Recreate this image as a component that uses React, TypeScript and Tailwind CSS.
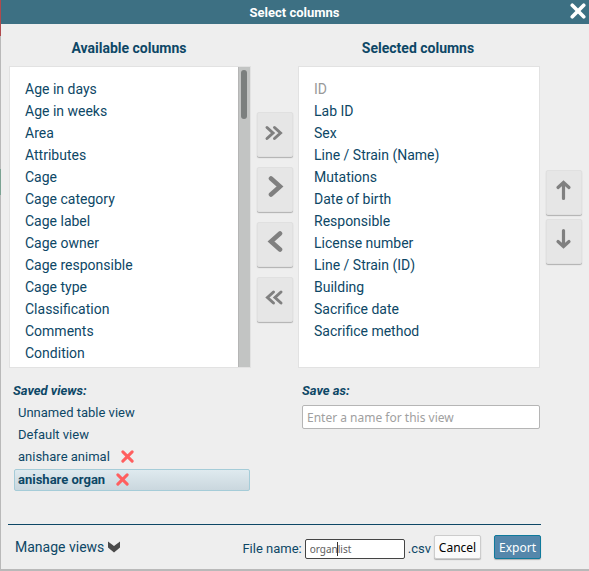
import type { ReactNode } from 'react';

const available = [
  'Age in days', 'Age in weeks', 'Area', 'Attributes', 'Cage', 'Cage category', 'Cage label',
  'Cage owner', 'Cage responsible', 'Cage type', 'Classification', 'Comments', 'Condition',
];

const selected = [
  'ID', 'Lab ID', 'Sex', 'Line / Strain (Name)', 'Mutations', 'Date of birth', 'Responsible',
  'License number', 'Line / Strain (ID)', 'Building', 'Sacrifice date', 'Sacrifice method',
];

function Stroke({ d, width }: { d: string; width: number }) {
  return (
    <svg
      viewBox="0 0 24 24"
      className="size-6"
      fill="none"
      stroke="currentColor"
      strokeWidth={width}
      strokeLinecap="round"
      strokeLinejoin="miter"
      aria-hidden="true"
    >
      <path d={d} />
    </svg>
  );
}

function ToolButton({ label, children }: { label: string; children: ReactNode }) {
  return (
    <button
      type="button"
      aria-label={label}
      className="flex h-[45px] w-9 items-start justify-center rounded-xs border border-[#e0e0e0] bg-[#e6e6e6] pt-2 text-[#808080] shadow-[0_1px_1px_#b0b0b0]"
    >
      {children}
    </button>
  );
}

function Cross({ className }: { className: string }) {
  return (
    <svg
      viewBox="0 0 14 14"
      className={className}
      fill="none"
      stroke="currentColor"
      strokeWidth="3.2"
      strokeLinecap="round"
      aria-hidden="true"
    >
      <path d="M2 2 12 12M12 2 2 12" />
    </svg>
  );
}

function DeleteButton({ label }: { label: string }) {
  return (
    <button type="button" aria-label={label} className="mb-0.5 ml-[11px] text-[#ff5f5f]">
      <Cross className="size-[13px]" />
    </button>
  );
}

export default function App() {
  return (
    <div className="flex bg-[#b9b9b9] pb-0.5 font-['Roboto',sans-serif] text-[13px] text-[#0d4766]">
      <div className="w-px">
        <div className="h-9 bg-[#b04a4d]" />
        <div className="mt-[133px] h-[26px] bg-[#7ba393]" />
      </div>
      <main className="flex-1 bg-[#eeeeee]">
        <header className="flex h-6 items-center bg-[#3d7083] pr-[3px] pl-[18px] text-white">
          <h1 className="flex-1 pt-0.5 text-center font-bold">Select columns</h1>
          <button type="button" aria-label="Close" className="mb-0.5">
            <Cross className="size-4" />
          </button>
        </header>

        <div className="flex pl-2">
          <section className="flex-1">
            <h2 className="pt-[14px] pr-0.5 pb-2 text-center text-sm font-bold">Available columns</h2>
            <div className="flex h-[302px] border border-[#e2e2e2] bg-white">
              <ul className="flex-1 overflow-hidden pt-[11px] pl-[15px] text-sm leading-[22px]">
                {available.map((name) => (
                  <li key={name}>{name}</li>
                ))}
              </ul>
              <div className="w-3 border-l border-[#b5b5b5] bg-[#c2c4c3] pt-[3px] pl-0.5">
                <div className="h-[49px] w-1.5 rounded-full bg-[#7b7f7e]" />
              </div>
            </div>
          </section>

          <div className="flex w-[47px] flex-col items-start gap-[10px] pt-[88px] pl-1.5">
            <ToolButton label="Add all">
              <Stroke width={3} d="M4 6.5 10 12 4 17.500M11.500 6.500 17.500 12 11.500 17.500" />
            </ToolButton>
            <ToolButton label="Add">
              <Stroke width={4.6} d="M8 2.500 17 10.500 8 18.500" />
            </ToolButton>
            <ToolButton label="Remove">
              <Stroke width={4.6} d="M17 2.500 8 10.500 17 18.500" />
            </ToolButton>
            <ToolButton label="Remove all">
              <Stroke width={3} d="M10.500 6 4.500 11.500 10.500 17M18 6 12 11.500 18 17" />
            </ToolButton>
          </div>

          <section className="flex-1">
            <h2 className="pt-[14px] pr-0.5 pb-2 text-center text-sm font-bold">Selected columns</h2>
            <ul className="h-[302px] border border-[#e2e2e2] bg-white pt-[11px] pl-[15px] text-sm leading-[22px]">
              {selected.map((name) => (
                <li key={name} className="first:text-[#999999]">{name}</li>
              ))}
            </ul>
          </section>

          <div className="flex w-[49px] flex-col items-start gap-1 pt-[146px] pl-1.5">
            <ToolButton label="Move up">
              <Stroke width={3.2} d="M11.500 19.500V4M6 8.500 11.500 3.500 17 8.500" />
            </ToolButton>
            <ToolButton label="Move down">
              <Stroke width={3.2} d="M11.500 2.500V18M6 13.500 11.500 18.500 17 13.500" />
            </ToolButton>
          </div>
        </div>

        <div className="mr-12 ml-[7px] flex h-[157px] gap-[52px] border-b border-[#0d4766] pt-3 pr-px">
          <section className="flex-1 pl-1 leading-[22px]">
            <h3 className="pl-px font-bold italic">Saved views:</h3>
            <ul>
              <li className="pl-1.5">Unnamed table view</li>
              <li className="pl-1.5">Default view</li>
              <li className="flex items-center pl-1.5">
                anishare animal
                <DeleteButton label="Delete anishare animal" />
              </li>
              <li className="mt-px ml-0.5 flex h-[22px] items-center rounded-xs border border-[#a5ccd8] bg-linear-to-b from-[#dfeaef] to-[#cad7de] pl-[3px] font-bold">
                anishare organ
                <DeleteButton label="Delete anishare organ" />
              </li>
            </ul>
          </section>
          <section className="flex-1">
            <label htmlFor="save-as" className="block leading-[22px] font-bold italic">Save as:</label>
            <input
              id="save-as"
              type="text"
              placeholder="Enter a name for this view"
              className="mt-[3px] block h-6 w-full rounded-xs border border-[#b5b5b5] bg-white px-1 font-['Noto_Sans',sans-serif] text-xs placeholder:text-[#a0a0a0]"
            />
          </section>
        </div>

        <footer className="mr-12 ml-2 flex h-11 items-center pl-1.5">
          <button type="button" className="flex items-center gap-1 text-sm">
            Manage views
            <svg viewBox="0 0 12 12" className="size-3 text-[#4a4a4a]" fill="currentColor" aria-hidden="true">
              <path d="M0 .5 6 5 12 .5V6.500L6 11.500 0 6.500Z" />
            </svg>
          </button>
          <label htmlFor="file-name" className="mt-1 ml-auto">File name:</label>
          <div className="relative mt-1 ml-[3px]">
            <input
              id="file-name"
              type="text"
              defaultValue="organlist"
              className="block h-5 w-[100px] rounded-xs border border-[#444444] bg-white px-1 font-['Noto_Sans',sans-serif] text-[10px] text-[#606060]"
            />
            <span className="absolute top-[3px] left-8 h-[14px] w-px bg-[#333333]" />
          </div>
          <span className="mt-1 ml-[3px]">.csv</span>
          <button
            type="button"
            className="ml-[3px] h-6 w-[47px] rounded-xs border border-[#cccccc] bg-[#fafafa] pt-0.5 font-['Noto_Sans',sans-serif] text-xs text-black shadow-[0_1px_1px_#b0b0b0]"
          >
            Cancel
          </button>
          <button
            type="button"
            className="ml-[13px] h-6 w-[47px] rounded-xs border border-[#0f7a9c] bg-[#5587ab] pt-0.5 font-['Noto_Sans',sans-serif] text-xs text-white shadow-[0_1px_1px_#b0b0b0]"
          >
            Export
          </button>
        </footer>
      </main>
    </div>
  );
}
